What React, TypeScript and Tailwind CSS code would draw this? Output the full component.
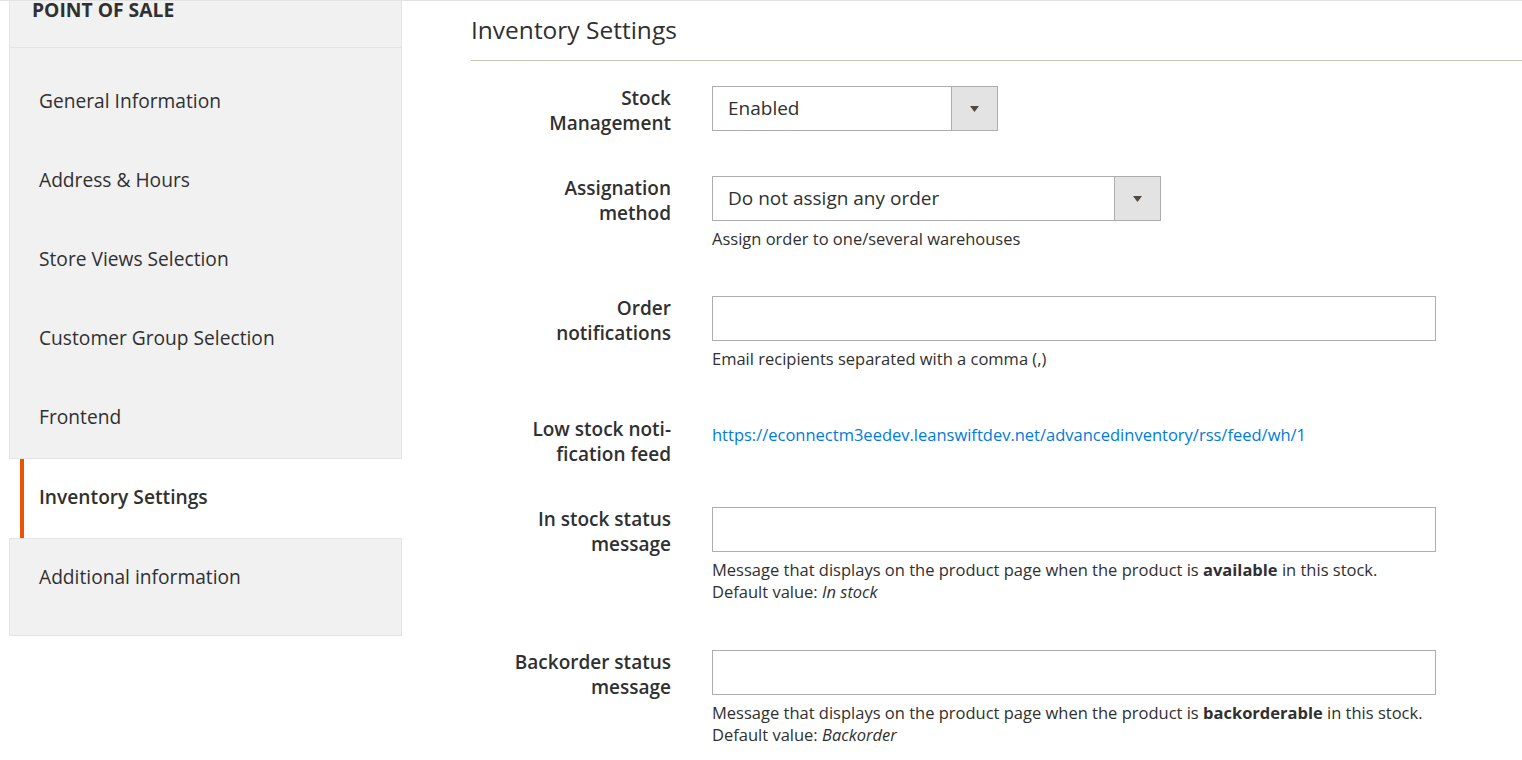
const navItems = [
  "General Information",
  "Address & Hours",
  "Store Views Selection",
  "Customer Group Selection",
  "Frontend",
];

function Arrow() {
  return (
    <svg width="9" height="6" viewBox="0 0 9 6" className="fill-[#514943]">
      <polygon points="0,0 9,0 4.5,6" />
    </svg>
  );
}

function Select({ value, width }: { value: string; width: string }) {
  return (
    <div className={`${width} h-[45px] border border-[#adadad] bg-white flex`}>
      <div className="flex-1 flex items-center pl-[15px] text-[19px]">{value}</div>
      <div className="w-[46px] bg-[#e3e3e3] border-l border-[#adadad] flex items-center justify-center">
        <Arrow />
      </div>
    </div>
  );
}

function TextInput() {
  return <div className="w-[724px] h-[45px] border border-[#adadad] bg-white" />;
}

function Note({ children }: { children: React.ReactNode }) {
  return <div className="mt-[7px] text-[16.5px] leading-[22px]">{children}</div>;
}

function Row({
  spacing,
  label,
  children,
}: {
  spacing: string;
  label: React.ReactNode;
  children: React.ReactNode;
}) {
  return (
    <div className={`flex items-start ${spacing}`}>
      <div className="w-[200px] shrink-0 text-right text-[19px] leading-[25px] font-semibold">
        {label}
      </div>
      <div className="ml-[41px]">{children}</div>
    </div>
  );
}

export default function App() {
  return (
    <div className="min-h-[760px] w-full bg-white border-t border-[#e3e3e3] flex items-start text-[#303030] font-['Open_Sans',sans-serif]">
      <aside className="ml-[9px] w-[393px] shrink-0">
        <div className="bg-[#f1f1f1] border-x border-b border-[#e3e3e3]">
          <div className="h-[47px] border-b border-[#e3e3e3] pl-[22px] flex items-start">
            <div className="-mt-[4px] text-[19.3px] leading-[25px] font-bold uppercase">Point of Sale</div>
          </div>
          <nav className="pt-[15px]">
            {navItems.map((item) => (
              <div key={item} className="h-[79px] flex items-center pb-[2px] pl-[29px] text-[19.2px]">
                {item}
              </div>
            ))}
          </nav>
        </div>
        <div className="ml-[11px] h-[79px] bg-white border-l-4 border-[#eb5202] flex items-center pb-[2px] pl-[15px] text-[19.2px] font-semibold">
          Inventory Settings
        </div>
        <div className="bg-[#f1f1f1] border border-[#e3e3e3] pb-[17px]">
          <div className="h-[79px] flex items-center pb-[2px] pl-[29px] text-[19.2px]">Additional information</div>
        </div>
      </aside>

      <main className="ml-[69px] flex-1">
        <h2 className="mt-[13px] pb-[14px] text-[24.5px] leading-[32px] border-b border-[#cac3b4]">
          Inventory Settings
        </h2>

        <Row spacing="mt-[25px]" label={<>Stock<br />Management</>}>
          <Select value="Enabled" width="w-[286px]" />
        </Row>

        <Row spacing="mt-[40px]" label={<>Assignation<br />method</>}>
          <Select value="Do not assign any order" width="w-[449px]" />
          <Note>Assign order to one/several warehouses</Note>
        </Row>

        <Row spacing="mt-[46px]" label={<>Order<br />notifications</>}>
          <TextInput />
          <Note>Email recipients separated with a comma (,)</Note>
        </Row>

        <Row spacing="mt-[47px]" label={<>Low stock noti-<br />fication feed</>}>
          <a className="block pt-[7px] text-[16.5px] leading-[22px] text-[#007bdb]">
            https://econnectm3eedev.leanswiftdev.net/advancedinventory/rss/feed/wh/1
          </a>
        </Row>

        <Row spacing="mt-[40px]" label={<>In stock status<br />message</>}>
          <TextInput />
          <Note>
            Message that displays on the product page when the product is <b className="font-bold">available</b> in this stock.
            <br />
            Default value: <i>In stock</i>
          </Note>
        </Row>

        <Row spacing="mt-[47px]" label={<>Backorder status<br />message</>}>
          <TextInput />
          <Note>
            Message that displays on the product page when the product is <b className="font-bold">backorderable</b> in this stock.
            <br />
            Default value: <i>Backorder</i>
          </Note>
        </Row>
      </main>
    </div>
  );
}
